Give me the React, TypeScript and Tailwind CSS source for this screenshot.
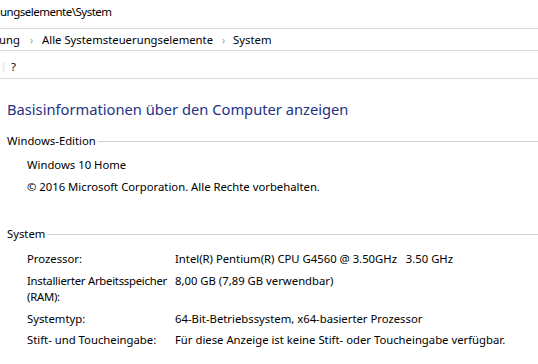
import React from "react";

const font = { fontFamily: '"Noto Sans", "Segoe UI", sans-serif' };

function Row({ label, children, className = "" }: { label: React.ReactNode; children: React.ReactNode; className?: string }) {
  return (
    <div className={"flex " + className}>
      <div className="w-[148px] shrink-0 leading-[16px]">{label}</div>
      <div className="leading-[16px] whitespace-nowrap">{children}</div>
    </div>
  );
}

export default function App() {
  return (
    <div className="w-[538px] h-[364px] overflow-hidden bg-white text-[11.3px] text-[#000]" style={font}>
      <div className="h-[29px] border-b border-[#dadada] pt-[3px] leading-[18px] text-[11.5px] tracking-[-0.5px] whitespace-nowrap">
        ungselemente\System
      </div>
      <div className="h-[22px] border-b border-[#dadada] flex items-center whitespace-nowrap leading-[16px]">
        <span className="-ml-[1px]">ung</span>
        <span className="ml-[10px] mr-[9px] text-[#a0a0a0] text-[10px]">›</span>
        <span>Alle Systemsteuerungselemente</span>
        <span className="ml-[9px] mr-[8px] text-[#a0a0a0] text-[10px]">›</span>
        <span>System</span>
      </div>
      <div className="h-[28px] border-b border-[#dadada] flex items-center pt-[5px]">
        <span className="ml-[2px] w-[3px] h-[10px] bg-[#f0f0f0]"></span>
        <span className="ml-[6px]">?</span>
      </div>
      <div className="pl-[7px]">
        <div className="mt-[19px] text-[14.7px] leading-[22px] text-[#1e3287]">
          Basisinformationen über den Computer anzeigen
        </div>
        <div className="mt-[13px] flex items-center leading-[16px]">
          <span>Windows-Edition</span>
          <span className="ml-[2px] flex-1 h-px bg-[#d0d0d0]"></span>
        </div>
        <div className="pl-[20px] mt-[8px] leading-[16px]">Windows 10 Home</div>
        <div className="pl-[20px] mt-[6px] leading-[16px]">© 2016 Microsoft Corporation. Alle Rechte vorbehalten.</div>
        <div className="mt-[31px] flex items-center leading-[16px]">
          <span>System</span>
          <span className="ml-[2px] flex-1 h-px bg-[#d0d0d0]"></span>
        </div>
        <div className="pl-[20px] mt-[9px] flex flex-col gap-[5px]">
          <Row label="Prozessor:">Intel(R) Pentium(R) CPU G4560 @ 3.50GHz&nbsp;&nbsp; 3.50 GHz</Row>
          <Row label={<span className="tracking-[-0.25px]">Installierter Arbeitsspeicher<br />(RAM):</span>} className="mt-[1px]">8,00 GB (7,89 GB verwendbar)</Row>
          <Row label="Systemtyp:" className="mt-[1px]">64-Bit-Betriebssystem, x64-basierter Prozessor</Row>
          <Row label="Stift- und Toucheingabe:">Für diese Anzeige ist keine Stift- oder Toucheingabe verfügbar.</Row>
        </div>
      </div>
    </div>
  );
}
